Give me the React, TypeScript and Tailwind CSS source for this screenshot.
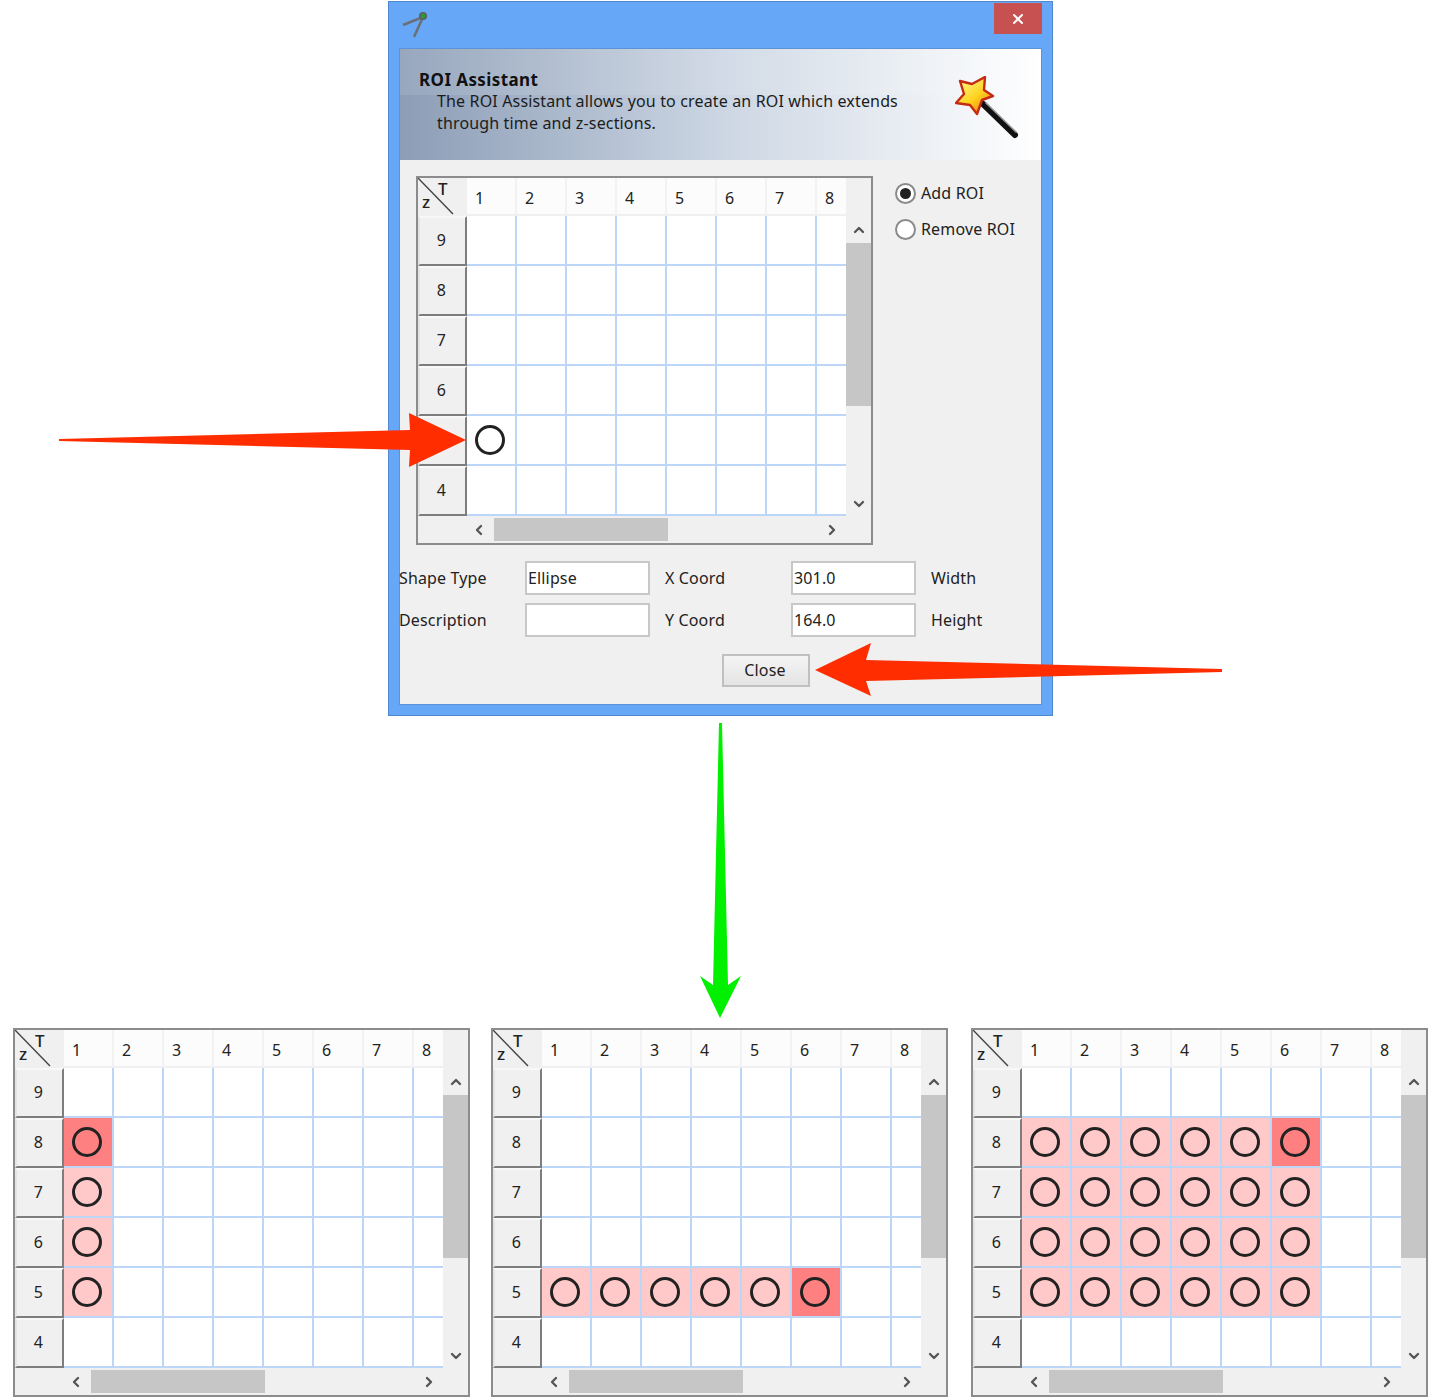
import { ChevronDown, ChevronLeft, ChevronRight, ChevronUp, X } from 'lucide-react';

const ROWS = [9, 8, 7, 6, 5, 4];
const COLS = [1, 2, 3, 4, 5, 6, 7, 8];

type Marks = { circles: string[]; light: string[]; strong: string[] };

function range(rows: number[], cols: number[]) {
  return rows.flatMap((r) => cols.map((c) => `${r}-${c}`));
}

function Cell({ id, marks }: { id: string; marks: Marks }) {
  const strong = marks.strong.includes(id);
  const light = marks.light.includes(id);
  return (
    <div
      className={`flex h-[50px] w-[50px] shrink-0 items-center border-r-2 border-b-2 border-[#bcd6f8] pl-[8px] ${
        strong ? 'bg-[#ff8080]' : light ? 'bg-[#ffc9c9]' : 'bg-white'
      }`}
    >
      {marks.circles.includes(id) && <div className="h-[30px] w-[30px] rounded-full border-[3px] border-[#222222]" />}
    </div>
  );
}

function RoiGrid({ marks }: { marks: Marks }) {
  return (
    <div className="flex h-[369px] w-[457px] shrink-0 flex-col border-2 border-[#8c8c8c] bg-[#f0f0f0]">
      <div className="flex h-[338px]">
        {/* row headers */}
        <div className="w-[49px] shrink-0">
          <div className="relative h-[38px] bg-[#f0f0f0] text-[17px] leading-[22px] text-[#222222]">
            <svg className="absolute top-0 left-0" width="38" height="38" viewBox="0 0 38 38">
              <line x1="0" y1="0" x2="35" y2="36" stroke="#444444" strokeWidth="1.4" />
            </svg>
            <span className="absolute top-[0px] left-[20px] font-medium">T</span>
            <span className="absolute top-[13px] left-[4px] font-medium">z</span>
          </div>
          {ROWS.map((r) => (
            <div
              key={r}
              className="flex h-[50px] items-center justify-center border-t-2 border-r-2 border-b-2 border-l-2 border-t-[#f8f8f8] border-r-[#7d7d7d] border-b-[#7d7d7d] border-l-[#e4e4e4] bg-[#f0f0f0] pr-[2px] pb-[3px] text-[16px] text-[#222222]"
            >
              {r}
            </div>
          ))}
        </div>
        {/* cells */}
        <div className="w-[379px] shrink-0 overflow-hidden">
          <div className="flex h-[38px] w-[400px] bg-[#f0f0f0]">
            {COLS.map((c) => (
              <div
                key={c}
                className="flex h-[36px] w-[50px] shrink-0 items-center border-r-2 border-[#f2f2f2] bg-[#fcfcfc] pt-[4px] pl-[8px] text-[16px] text-[#222222]"
              >
                {c}
              </div>
            ))}
          </div>
          {ROWS.map((r) => (
            <div key={r} className="flex w-[400px]">
              {COLS.map((c) => (
                <Cell key={c} id={`${r}-${c}`} marks={marks} />
              ))}
            </div>
          ))}
        </div>
        {/* vertical scrollbar */}
        <div className="flex w-[25px] shrink-0 flex-col items-center pt-[44px] text-[#555555]">
          <ChevronUp size={16} strokeWidth={3.5} />
          <div className="mt-[5px] h-[163px] w-full bg-[#c6c6c6]" />
          <ChevronDown size={16} strokeWidth={3.5} className="mt-[90px]" />
        </div>
      </div>
      {/* horizontal scrollbar */}
      <div className="flex h-[27px] items-center pl-[53px] text-[#555555]">
        <ChevronLeft size={16} strokeWidth={3.5} />
        <div className="ml-[7px] h-[23px] w-[174px] bg-[#c6c6c6]" />
        <ChevronRight size={16} strokeWidth={3.5} className="ml-[156px]" />
      </div>
    </div>
  );
}

function Radio({ label, checked }: { label: string; checked?: boolean }) {
  return (
    <div className="flex h-[21px] items-center gap-[5px] text-[#222222]">
      <div className="flex h-[21px] w-[21px] items-center justify-center rounded-full border-2 border-[#8a8a8a] bg-white">
        {checked && <div className="h-[11px] w-[11px] rounded-full bg-[#222222]" />}
      </div>
      <span className="pb-[2px]">{label}</span>
    </div>
  );
}

function Field({ value }: { value?: string }) {
  return (
    <div className="flex h-[34px] w-[125px] items-center border-2 border-[#c8c8c8] bg-white pl-[1px] text-[#222222]">
      {value}
    </div>
  );
}

function WandIcon() {
  return (
    <svg width="66" height="66" viewBox="0 0 66 66">
      <defs>
        <linearGradient id="starFill" x1="0.2" y1="0.1" x2="0.8" y2="0.9">
          <stop offset="0" stopColor="#fff27a" />
          <stop offset="0.55" stopColor="#ffd21e" />
          <stop offset="1" stopColor="#f08a12" />
        </linearGradient>
      </defs>
      <line x1="28" y1="28" x2="60" y2="59" stroke="#111111" strokeWidth="6" strokeLinecap="round" />
      <line x1="31" y1="27" x2="61" y2="56" stroke="#9a9a9a" strokeWidth="1.6" strokeLinecap="round" />
      <polygon
        points="5,5 17,8 30,1 29,14 38,20 27,24 22,38 15,29 1,27 9,18"
        fill="url(#starFill)"
        stroke="#c62a12"
        strokeWidth="2.4"
        strokeLinejoin="round"
      />
    </svg>
  );
}

function CompassIcon() {
  return (
    <svg width="28" height="28" viewBox="0 0 28 28">
      <line x1="21" y1="6" x2="1" y2="14" stroke="#6b7078" strokeWidth="2.6" />
      <line x1="21" y1="6" x2="12" y2="26" stroke="#6b7078" strokeWidth="2.6" />
      <circle cx="21" cy="5" r="4" fill="#5c6066" />
      <circle cx="21" cy="5" r="2.4" fill="#2f9a34" />
    </svg>
  );
}

function Arrows() {
  return (
    <svg className="pointer-events-none absolute top-0 left-0" width="1429" height="1398" viewBox="0 0 1429 1398">
      <polygon points="59,439 410,430 409,413 466,440 409,467 410,450 59,441" fill="#ff2d00" />
      <polygon points="1222,669 1222,672 866,681 871,696 815,670 871,643 866,660" fill="#ff2d00" />
      <polygon points="719,723 722,723 728,985 741,976 720,1018 700,976 713,985" fill="#00f000" />
    </svg>
  );
}

const empty: string[] = [];

export default function App() {
  return (
    <div className="relative h-[1398px] w-[1429px] overflow-hidden bg-white font-['Noto_Sans',sans-serif] text-[16px] tracking-[0.15px]">
      {/* dialog */}
      <div className="mt-px ml-[388px] w-[665px] border border-[#4f88cc] bg-[#66a8f7]">
        <div className="flex h-[46px] items-start justify-between pr-[10px]">
          <div className="mt-[9px] ml-[13px]">
            <CompassIcon />
          </div>
          <div className="mt-[1px] flex h-[31px] w-[48px] items-center justify-center bg-[#c75050] text-white">
            <X size={16} strokeWidth={3} />
          </div>
        </div>
        <div className="mx-[10px] mb-[10px] h-[657px] border border-[#5b93d6] bg-[#f0f0f0]">
          {/* banner */}
          <div className="relative flex h-[111px] justify-between overflow-hidden bg-gradient-to-r from-[#8c9db6] via-[#ccd6e3] to-white pt-[20px] pl-[19px] leading-[22px] text-[#1c1c1c]">
            <div className="absolute top-0 left-0 h-[46px] w-full rounded-br-[400px] bg-white/10" />
            <div className="relative">
              <div className="text-[17px] leading-[21px] font-bold tracking-[0.4px] text-[#111111]">ROI Assistant</div>
              <div className="w-[490px] pl-[18px]">
                The ROI Assistant allows you to create an ROI which extends through time and z-sections.
              </div>
            </div>
            <div className="relative mt-[-13px] mr-[20px] self-start pt-[20px]">
              <WandIcon />
            </div>
          </div>

          <div className="flex pt-[16px] pl-[16px]">
            <RoiGrid marks={{ circles: ['5-1'], light: empty, strong: empty }} />
            <div className="mt-[7px] ml-[22px] flex flex-col gap-[15px]">
              <Radio label="Add ROI" checked />
              <Radio label="Remove ROI" />
            </div>
          </div>

          {/* form */}
          <div className="mt-[16px] -ml-px grid grid-cols-[126px_140px_126px_140px_auto] items-center gap-y-[8px] text-[#222222]">
            <div>Shape Type</div>
            <Field value="Ellipse" />
            <div>X Coord</div>
            <Field value="301.0" />
            <div>Width</div>
            <div>Description</div>
            <Field />
            <div>Y Coord</div>
            <Field value="164.0" />
            <div>Height</div>
          </div>

          <div className="mt-[17px] ml-[322px] flex h-[33px] w-[88px] items-center justify-center border-2 border-[#c0c0c0] bg-gradient-to-b from-[#f4f4f4] to-[#e4e4e4] pr-[2px] pb-[2px] text-[#222222]">
            Close
          </div>
        </div>
      </div>

      {/* results */}
      <div className="mt-[312px] flex pl-[13px]">
        <RoiGrid
          marks={{
            circles: range([8, 7, 6, 5], [1]),
            light: range([7, 6, 5], [1]),
            strong: ['8-1'],
          }}
        />
        <div className="ml-[21px]">
          <RoiGrid
            marks={{
              circles: range([5], [1, 2, 3, 4, 5, 6]),
              light: range([5], [1, 2, 3, 4, 5]),
              strong: ['5-6'],
            }}
          />
        </div>
        <div className="ml-[23px]">
          <RoiGrid
            marks={{
              circles: range([8, 7, 6, 5], [1, 2, 3, 4, 5, 6]),
              light: range([8, 7, 6, 5], [1, 2, 3, 4, 5, 6]),
              strong: ['8-6'],
            }}
          />
        </div>
      </div>

      <Arrows />
    </div>
  );
}
